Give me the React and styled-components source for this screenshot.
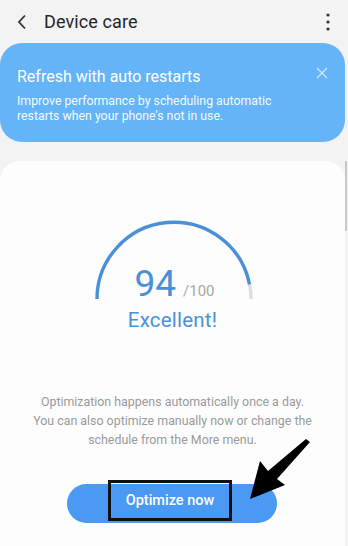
import React from 'react'
import styled, { createGlobalStyle } from 'styled-components'

const Global = createGlobalStyle`
  html, body {
    margin: 0;
    padding: 0;
    background: #f3f3f3;
    font-family: Roboto, "Liberation Sans", sans-serif;
  }
`

const Screen = styled.div`
  position: relative;
  width: 348px;
  height: 546px;
  overflow: hidden;
  display: flex;
  flex-direction: column;
  background: #f3f3f3;
`

const Header = styled.div`
  height: 43px;
  display: flex;
  align-items: center;
  padding: 0 18px 0 17px;
  flex-shrink: 0;
`

const Title = styled.h1`
  flex: 1;
  margin: 0 0 0 17px;
  font-size: 18px;
  font-weight: 400;
  color: #252525;
  letter-spacing: 0.1px;
`

const Banner = styled.div`
  position: relative;
  margin-right: 3px;
  height: 99px;
  box-sizing: border-box;
  padding: 24px 40px 0 17px;
  background: #64b4f7;
  border-radius: 22px;
  color: #fff;
  flex-shrink: 0;
`

const BannerTitle = styled.div`
  font-size: 16px;
  line-height: 20px;
  margin-bottom: 7px;
`

const BannerText = styled.div`
  font-size: 12.3px;
  line-height: 15px;
  opacity: 0.95;
`

const Close = styled.div`
  position: absolute;
  top: 21px;
  right: 17px;
`

const Card = styled.div`
  position: relative;
  flex: 1;
  margin-top: 19px;
  margin-right: 3px;
  background: #fdfdfd;
  border-radius: 20px 20px 0 0;
  display: flex;
  flex-direction: column;
  align-items: center;
  padding-top: 59px;
`

const Scrollbar = styled.div`
  position: absolute;
  right: -2px;
  top: 0;
  width: 2px;
  height: 70px;
  background: #c8c8c8;
`

const Gauge = styled.div`
  position: relative;
  width: 160px;
  height: 82px;
  margin-left: 2px;
`

const Score = styled.div`
  position: absolute;
  left: 0;
  right: 0;
  bottom: 0;
  display: flex;
  justify-content: center;
  align-items: baseline;
  margin-left: 2px;
`

const Big = styled.span`
  font-size: 37px;
  line-height: 37px;
  color: #4a8fd8;
`

const Small = styled.span`
  font-size: 15px;
  color: #a8a8a8;
  margin-left: 7px;
`

const Rating = styled.div`
  margin-top: 6px;
  font-size: 20.5px;
  color: #4a90d9;
  letter-spacing: 0.2px;
`

const Description = styled.p`
  margin: 60px 0 0;
  font-size: 12.4px;
  line-height: 19px;
  color: #9a9a9a;
  text-align: center;
`

const Button = styled.button`
  position: relative;
  margin-top: 35px;
  margin-left: -1px;
  width: 210px;
  height: 39px;
  border: none;
  border-radius: 20px;
  background: #4a9af3;
  color: #fff;
  font-family: Roboto, "Liberation Sans", sans-serif;
  font-size: 14.5px;
  font-weight: 500;
  padding: 0;
`

const Marker = styled.span`
  position: absolute;
  left: 41px;
  top: -4px;
  width: 124px;
  height: 41px;
  box-sizing: border-box;
  border: 3px solid #111;
  display: flex;
  align-items: center;
  justify-content: center;
`

const Arrow = styled.svg`
  position: absolute;
  left: 0;
  top: 0;
  pointer-events: none;
`

function Chevron() {
  return (
    <svg width="10" height="16" viewBox="0 0 10 16">
      <path d="M8 1.5L2 8l6 6.5" fill="none" stroke="#333" strokeWidth="1.8" />
    </svg>
  )
}

function Kebab() {
  return (
    <svg width="4" height="18" viewBox="0 0 4 18">
      <circle cx="2" cy="2" r="1.6" fill="#333" />
      <circle cx="2" cy="9" r="1.6" fill="#333" />
      <circle cx="2" cy="16" r="1.6" fill="#333" />
    </svg>
  )
}

function CloseIcon() {
  return (
    <svg width="12" height="12" viewBox="0 0 12 12">
      <path d="M1 1l10 10M11 1L1 11" stroke="#cfe7fc" strokeWidth="1.4" />
    </svg>
  )
}

function Arc() {
  return (
    <svg width="160" height="82" viewBox="0 0 160 82">
      <path d="M3 79 A77 77 0 0 1 155.6 64.6" fill="none" stroke="#4a90d9" strokeWidth="3.4" />
      <path d="M155.6 64.6 A77 77 0 0 1 157 79" fill="none" stroke="#dcdcdc" strokeWidth="3.4" />
    </svg>
  )
}

export default function App() {
  return (
    <Screen>
      <Global />
      <Header>
        <Chevron />
        <Title>Device care</Title>
        <Kebab />
      </Header>
      <Banner>
        <BannerTitle>Refresh with auto restarts</BannerTitle>
        <BannerText>
          Improve performance by scheduling automatic
          <br />
          restarts when your phone's not in use.
        </BannerText>
        <Close>
          <CloseIcon />
        </Close>
      </Banner>
      <Card>
        <Scrollbar />
        <Gauge>
          <Arc />
          <Score>
            <Big>94</Big>
            <Small>/100</Small>
          </Score>
        </Gauge>
        <Rating>Excellent!</Rating>
        <Description>
          Optimization happens automatically once a day.
          <br />
          You can also optimize manually now or change the
          <br />
          schedule from the More menu.
        </Description>
        <Button>
          <Marker>Optimize now</Marker>
        </Button>
      </Card>
      <Arrow width="348" height="546" viewBox="0 0 348 546">
        <polygon points="310,442 277,479 285,485 250,499 260,461 268,471 306,439" fill="#000" />
      </Arrow>
    </Screen>
  )
}
